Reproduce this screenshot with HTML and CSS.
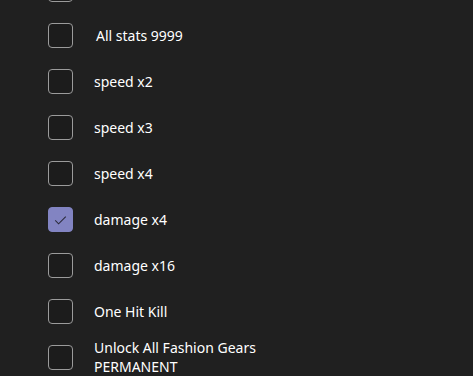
FILE: index.html
```html
<!DOCTYPE html>
<html>
<head>
<meta charset="utf-8">
<link rel="stylesheet" href="styles.css">
</head>
<body>
<div class="list">
  <label class="row"><span class="box"></span><span class="text"></span></label>
  <label class="row"><span class="box"></span><span class="text a">All stats 9999</span></label>
  <label class="row"><span class="box"></span><span class="text">speed x2</span></label>
  <label class="row"><span class="box"></span><span class="text">speed x3</span></label>
  <label class="row"><span class="box"></span><span class="text">speed x4</span></label>
  <label class="row"><span class="box checked"><svg width="24" height="24" viewBox="0 0 24 24"><path d="M6.5 13 L10 16.5 L17.5 9" fill="none" stroke="#2a2a3a" stroke-width="1.1"/></svg></span><span class="text">damage x4</span></label>
  <label class="row"><span class="box"></span><span class="text">damage x16</span></label>
  <label class="row"><span class="box"></span><span class="text">One Hit Kill</span></label>
  <label class="row"><span class="box"></span><span class="text">Unlock All Fashion Gears<br>PERMANENT</span></label>
</div>
</body>
</html>
```

FILE: styles.css
```css
html, body {
  margin: 0;
  padding: 0;
  background: #202020;
  overflow: hidden;
}
body {
  font-family: "Noto Sans", "Segoe UI", sans-serif;
  font-size: 14px;
  color: #ffffff;
}
.list {
  display: flex;
  flex-direction: column;
  margin-top: -34px;
  padding-left: 48px;
}
.row {
  display: flex;
  align-items: center;
  min-height: 46px;
}
.box {
  width: 23px;
  height: 23px;
  border: 1px solid #9b9b9b;
  border-radius: 4px;
  flex-shrink: 0;
  box-sizing: content-box;
  background: #1c1c1c;
}
.box.checked {
  background: #8284c2;
  border-color: #8284c2;
  display: flex;
}
.box svg {
  display: block;
  width: 23px;
  height: 23px;
}
.text {
  margin-left: 21px;
  line-height: 19px;
}
.text.a {
  margin-left: 23px;
}
```
